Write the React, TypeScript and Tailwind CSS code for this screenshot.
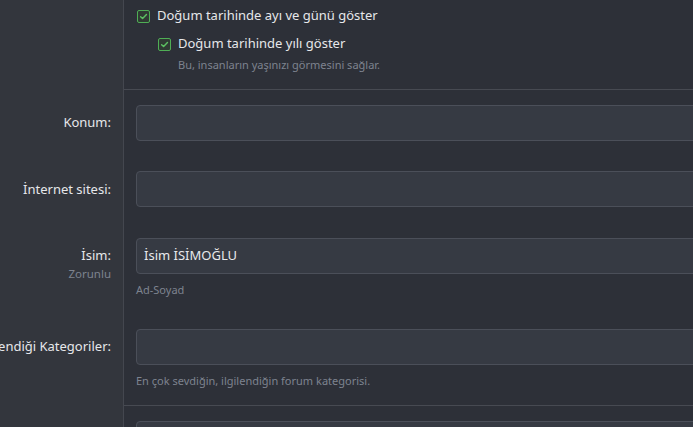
import React from 'react';

function Check({ label }: { label: string }) {
	return (
		<label className="flex items-center gap-[7px] h-[18px]">
			<span className="flex h-[13px] w-[13px] items-center justify-center rounded-[2px] border border-[#4fae55] bg-[#2f3a33]">
				<svg viewBox="0 0 10 10" className="h-[9px] w-[9px]" fill="none" stroke="#5cc062" strokeWidth="1.6" strokeLinecap="round" strokeLinejoin="round">
					<path d="M1.8 5.2 4 7.3 8.3 2.7" />
				</svg>
			</span>
			<span className="text-[13px] text-[#e6e7ea]">{label}</span>
		</label>
	);
}

function Row({
	label,
	hint,
	help,
	value,
	top,
	bottom,
	pad = 'pt-[15px] pb-[15px]',
}: {
	label: string;
	hint?: string;
	help?: string;
	value?: string;
	top?: boolean;
	bottom?: boolean;
	pad?: string;
}) {
	return (
		<div className="flex">
			<div className="flex w-[124px] shrink-0 flex-col items-end border-r border-[#44474f] bg-[#33363d] pr-[12px] pt-[24px]">
				<span className="whitespace-nowrap text-[13px] leading-[18px] text-[#e6e7ea]">{label}</span>
				{hint && <span className="mt-[3px] text-[11.5px] leading-[14px] text-[#7d838f]">{hint}</span>}
			</div>
			<div
				className={`flex-1 pl-[12px] ${pad} ${top ? 'border-t border-[#474a52]' : ''} ${
					bottom ? 'border-b border-[#474a52]' : ''
				}`}
			>
				<div className="flex h-[36px] w-[700px] items-center rounded-[4px] border border-[#4b4f59] bg-[#363a43] px-[7px] text-[13px] text-[#e8e9ec]">
					{value}
				</div>
				{help && <p className="mt-[8px] text-[11px] leading-[16px] text-[#7d838f]">{help}</p>}
			</div>
		</div>
	);
}

export default function App() {
	return (
		<div
			className="h-[427px] w-[693px] overflow-hidden bg-[#2d3038]"
			style={{ fontFamily: '"Noto Sans", "Open Sans", sans-serif' }}
		>
			<div className="w-[1000px]">
				<div className="flex">
					<div className="w-[124px] shrink-0 border-r border-[#44474f] bg-[#33363d]" />
					<div className="flex-1 pb-[16px] pl-[13px] pt-[7px]">
						<Check label="Doğum tarihinde ayı ve günü göster" />
						<div className="mt-[10px] pl-[21px]">
							<Check label="Doğum tarihinde yılı göster" />
							<p className="mt-[4px] pl-[20px] text-[11px] leading-[16px] text-[#7d838f]">
								Bu, insanların yaşınızı görmesini sağlar.
							</p>
						</div>
					</div>
				</div>
				<Row label="Konum:" top />
				<Row label="İnternet sitesi:" />
				<Row label="İsim:" hint="Zorunlu" value="İsim İSİMOĞLU" help="Ad-Soyad" pad="pt-[16px] pb-[15px]" />
				<Row
					label="İlgilendiği Kategoriler:"
					help="En çok sevdiğin, ilgilendiğin forum kategorisi."
					bottom
					pad="pt-[16px] pb-[16px]"
				/>
				<Row label="" />
			</div>
		</div>
	);
}
